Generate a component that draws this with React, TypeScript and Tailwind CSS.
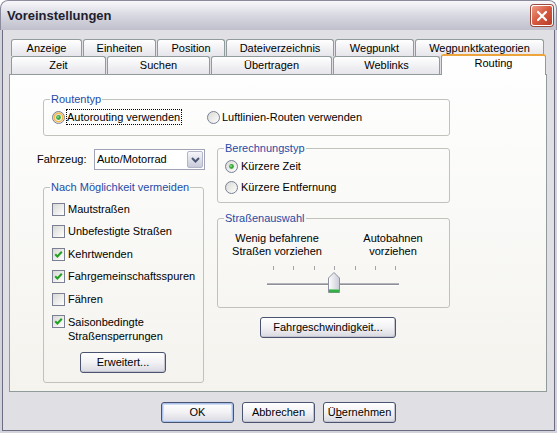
import React from "react";

const FONT = "font-['Liberation_Sans',Arial,sans-serif]";

type TabDef = { label: string; w: string; selected?: boolean };

const rowBack: TabDef[] = [
  { label: "Anzeige", w: "w-[71px]" },
  { label: "Einheiten", w: "w-[73px]" },
  { label: "Position", w: "w-[68px]" },
  { label: "Dateiverzeichnis", w: "w-[108px]" },
  { label: "Wegpunkt", w: "w-[79px]" },
  { label: "Wegpunktkategorien", w: "w-[129px]" },
];

const rowFront: TabDef[] = [
  { label: "Zeit", w: "w-[95px]" },
  { label: "Suchen", w: "w-[103px]" },
  { label: "Übertragen", w: "w-[121px]" },
  { label: "Weblinks", w: "w-[107px]" },
  { label: "Routing", w: "w-[105px]", selected: true },
];

function Tab({ t, tall }: { t: TabDef; tall: string }) {
  if (t.selected) {
    return (
      <div
        className={`${t.w} relative z-10 -mb-[1px] flex h-[21px] items-center justify-center rounded-t-[3px] border-x border-t-2 border-x-[#919b9c] border-t-[#eea43c] bg-[#fefefe] pb-[4px] text-[11px] leading-[13px]`}
      >
        {t.label}
      </div>
    );
  }
  return (
    <div
      className={`${t.w} ${tall} flex items-center justify-center rounded-t-[3px] border border-b-0 border-[#919b9c] bg-gradient-to-b from-white to-[#e5e5eb] text-[11px] leading-[13px]`}
    >
      {t.label}
    </div>
  );
}

function Radio({ checked, hot }: { checked?: boolean; hot?: boolean }) {
  return (
    <svg width="13" height="13" viewBox="0 0 13 13" className="shrink-0">
      <defs>
        <linearGradient id="radioFill" x1="0" y1="0" x2="1" y2="1">
          <stop offset="0" stopColor="#d8d8d4" />
          <stop offset="1" stopColor="#ffffff" />
        </linearGradient>
      </defs>
      <circle cx="6.5" cy="6.5" r="6" fill="url(#radioFill)" stroke="#7a7f93" />
      {hot && <circle cx="6.5" cy="6.5" r="4.3" fill="none" stroke="#f6b84a" strokeWidth="1.6" />}
      {checked && <circle cx="6.5" cy="6.5" r="2.4" fill="#3aa83a" />}
      {checked && <circle cx="6" cy="6" r="1" fill="#8bd88b" />}
    </svg>
  );
}

function Checkbox({ checked }: { checked?: boolean }) {
  return (
    <div className="flex h-[13px] w-[13px] shrink-0 items-center justify-center border border-[#7a7f93] bg-gradient-to-br from-[#d8d8d4] to-white">
      {checked && (
        <svg width="11" height="11" viewBox="0 0 11 11">
          <path d="M2.2 5.2 L4.4 7.5 L8.8 2.8" fill="none" stroke="#21a121" strokeWidth="2" />
        </svg>
      )}
    </div>
  );
}

function Button({
  label,
  cls,
  primary,
}: {
  label: React.ReactNode;
  cls: string;
  primary?: boolean;
}) {
  return (
    <div
      className={`${cls} flex items-center justify-center rounded-[3px] border border-[#4a5470] bg-gradient-to-b from-white via-[#f2f2f5] to-[#d8d8e0] text-[11px] leading-[13px] text-black ${
        primary
          ? "shadow-[inset_0_0_0_1px_#a9c0ea,inset_0_0_0_2px_#d2def5]"
          : "shadow-[inset_-1px_-1px_0_#c4c4d0]"
      }`}
    >
      {label}
    </div>
  );
}

function Group({
  title,
  cls,
  children,
}: {
  title: string;
  cls: string;
  children: React.ReactNode;
}) {
  return (
    <fieldset className={`${cls} rounded-[3px] border border-[#c2c2bc]`}>
      <legend className="ml-[6px] px-[1px] text-[11px] leading-[13px] text-[#1f4ba6]">
        {title}
      </legend>
      {children}
    </fieldset>
  );
}

function Slider() {
  const ticks = [11, 31, 52, 72, 93, 113, 133];
  return (
    <svg width="142" height="34" viewBox="0 0 142 34" className="block">
      <defs>
        <linearGradient id="thumbFill" x1="0" y1="0" x2="1" y2="0">
          <stop offset="0" stopColor="#ffffff" />
          <stop offset="1" stopColor="#c9cad6" />
        </linearGradient>
      </defs>
      {ticks.map((x) => (
        <line key={x} x1={x + 0.5} y1="4" x2={x + 0.5} y2="8" stroke="#a3a3a8" strokeWidth="1" />
      ))}
      <line x1="5" y1="21.5" x2="137" y2="21.5" stroke="#b4b4ba" strokeWidth="1" />
      <line x1="5" y1="22.5" x2="137" y2="22.5" stroke="#8e8e96" strokeWidth="1" />
      <line x1="5" y1="23.5" x2="137" y2="23.5" stroke="#ffffff" strokeWidth="1" />
      <path
        d="M66.5 30.5 L66.5 16 L72 10.5 L77.5 16 L77.5 30.5 Z"
        fill="url(#thumbFill)"
        stroke="#8d909e"
      />
      <rect x="67" y="27.5" width="10" height="3" fill="#36ad45" />
      <rect x="67" y="27" width="10" height="1" fill="#7fd08a" />
    </svg>
  );
}

export default function App() {
  return (
    <div className={`${FONT} h-[433px] w-[557px] overflow-hidden rounded-t-[8px] bg-[#d3d3dc] text-black`}>
      {/* title bar */}
      <div className="flex h-[30px] items-center justify-between rounded-t-[8px] border-x border-t border-[#8a8a9c] bg-gradient-to-b from-[#f8f8fb] via-[#d8d8e2] to-[#c0c0cc] pl-[6px] pr-[3px]">
        <span className="pt-[1px] text-[13px] font-bold leading-[16px] text-[#1e1e30]">
          Voreinstellungen
        </span>
        <div className="flex h-[21px] w-[22px] items-center justify-center rounded-[3px] border border-white bg-gradient-to-br from-[#ee9a84] via-[#d5583f] to-[#b93a26] shadow-[0_0_0_1px_#9a4a3c]">
          <svg width="12" height="12" viewBox="0 0 12 12">
            <path d="M2 2 L10 10 M10 2 L2 10" stroke="white" strokeWidth="2.2" strokeLinecap="round" />
          </svg>
        </div>
      </div>

      {/* dialog body */}
      <div className="mx-[2px] h-[401px] border-x border-b border-[#6d6d82] bg-[#e0dfe3]">
        <div className="ml-[6px] w-[538px] pt-[9px]">
          <div className="flex h-[17px] gap-[1px] pl-[2px]">
            {rowBack.map((t) => (
              <Tab key={t.label} t={t} tall="h-[17px]" />
            ))}
          </div>
          <div className="flex h-[18px] items-end gap-[1px] pl-[2px]">
            {rowFront.map((t) => (
              <Tab key={t.label} t={t} tall="h-[18px]" />
            ))}
          </div>

          {/* Routing page */}
          <div className="h-[318px] w-[538px] border border-[#919b9c] bg-gradient-to-b from-[#fefefe] to-[#f4f3ee] text-[11px] leading-[13px]">
            <Group title="Routentyp" cls="ml-[33px] mt-[18px] h-[43px] w-[407px]">
              <div className="mt-[3px] flex h-[16px] items-center pl-[8px]">
                <div className="flex w-[155px] items-center">
                  <Radio checked hot />
                  <span className="ml-[1px] border border-dotted border-black pr-[1px] leading-[14px]">
                    Autorouting verwenden
                  </span>
                </div>
                <div className="flex items-center">
                  <Radio />
                  <span className="ml-[2px]">Luftlinien-Routen verwenden</span>
                </div>
              </div>
            </Group>

            <div className="mt-[6px] flex">
              {/* left column */}
              <div className="w-[207px]">
                <div className="ml-[27px] mt-[7px] flex h-[21px] items-center">
                  <span className="w-[57px]">Fahrzeug:</span>
                  <div className="flex h-[21px] w-[111px] items-center justify-between border border-[#9fa3b5] bg-white pl-[2px]">
                    <span>Auto/Motorrad</span>
                    <div className="mr-[1px] flex h-[17px] w-[16px] items-center justify-center rounded-[2px] border border-[#b3b6c8] bg-gradient-to-b from-[#f6f6fb] to-[#c8cad9]">
                      <svg width="9" height="6" viewBox="0 0 9 6">
                        <path d="M1 1 L4.5 4.5 L8 1" fill="none" stroke="#4a5674" strokeWidth="2" />
                      </svg>
                    </div>
                  </div>
                </div>

                <Group title="Nach Möglichkeit vermeiden" cls="ml-[33px] mt-[11px] h-[202px] w-[161px]">
                  <div className="pl-[8px] pt-[8.5px]">
                    {[
                      ["Mautstraßen", false],
                      ["Unbefestigte Straßen", false],
                      ["Kehrtwenden", true],
                      ["Fahrgemeinschaftsspuren", true],
                      ["Fähren", false],
                    ].map(([label, on]) => (
                      <div key={label as string} className="flex h-[22.5px] items-start">
                        <Checkbox checked={on as boolean} />
                        <span className="ml-[3px]">{label as string}</span>
                      </div>
                    ))}
                    <div className="flex items-start">
                      <Checkbox checked />
                      <span className="ml-[3px] leading-[14px]">
                        Saisonbedingte
                        <br />
                        Straßensperrungen
                      </span>
                    </div>
                    <Button label="Erweitert..." cls="ml-[28px] mt-[9px] h-[21px] w-[86px]" />
                  </div>
                </Group>
              </div>

              {/* right column */}
              <div className="w-[233px]">
                <Group title="Berechnungstyp" cls="h-[61px] w-[233px]">
                  <div className="pl-[7px] pt-[1px]">
                    <div className="flex h-[21px] items-center">
                      <Radio checked />
                      <span className="ml-[3px]">Kürzere Zeit</span>
                    </div>
                    <div className="flex h-[21px] items-center">
                      <Radio />
                      <span className="ml-[3px]">Kürzere Entfernung</span>
                    </div>
                  </div>
                </Group>

                <Group title="Straßenauswahl" cls="mt-[9px] h-[96px] w-[233px]">
                  <div className="mt-[7px] flex">
                    <div className="ml-[9px] w-[100px] text-center">
                      Wenig befahrene
                      <br />
                      Straßen vorziehen
                    </div>
                    <div className="ml-[16px] w-[100px] text-center">
                      Autobahnen
                      <br />
                      vorziehen
                    </div>
                  </div>
                  <div className="ml-[44px] mt-[4px]">
                    <Slider />
                  </div>
                </Group>

                <Button label="Fahrgeschwindigkeit..." cls="ml-[43px] mt-[9px] h-[21px] w-[136px]" />
              </div>
            </div>
          </div>
        </div>

        {/* dialog buttons */}
        <div className="ml-[158px] mt-[10px] flex gap-[8px]">
          <Button label="OK" cls="h-[21px] w-[73px]" primary />
          <Button label="Abbrechen" cls="h-[21px] w-[73px]" />
          <Button
            label={
              <span>
                Ü<span className="underline underline-offset-[1px]">b</span>ernehmen
              </span>
            }
            cls="h-[21px] w-[73px]"
          />
        </div>
      </div>
    </div>
  );
}
